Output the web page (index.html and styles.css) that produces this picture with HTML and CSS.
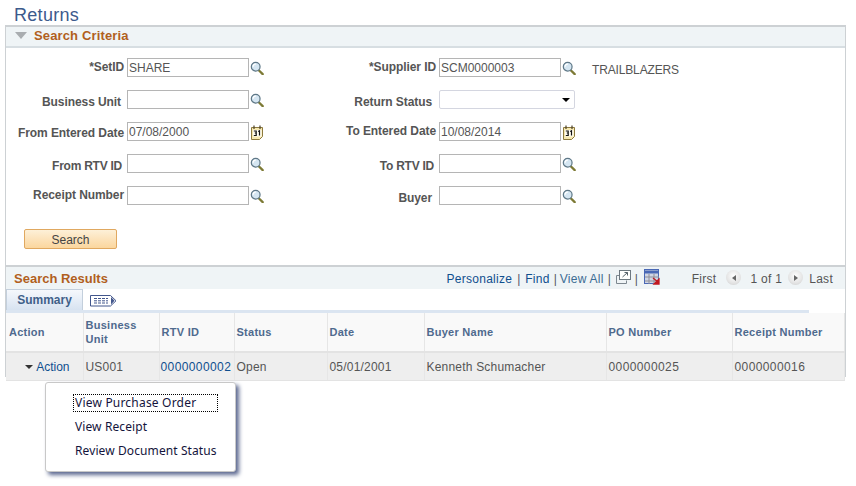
FILE: index.html
```html
<!DOCTYPE html>
<html lang="en">
<head>
<meta charset="utf-8">
<title>Returns</title>
<link rel="stylesheet" href="styles.css">
</head>
<body>
<svg class="defs" width="0" height="0" aria-hidden="true">
  <symbol id="lookup" viewBox="0 0 16 16">
    <path d="M10 10.500l4.500 4.500" stroke="#7d7a35" stroke-width="2.600" stroke-linecap="round"/>
    <circle cx="6.500" cy="6.500" r="5" fill="#d5e6f2" stroke="#5f7887" stroke-width="1.400"/>
    <path d="M3.600 6.500a3 3 0 0 1 3-3" fill="none" stroke="#fff" stroke-width="1.300"/>
  </symbol>
  <symbol id="cal" viewBox="0 0 12 15">
    <path d="M.5 2.500h11v9l-3 3h-8z" fill="#f6e8b0" stroke="#8d7a3e"/>
    <path d="M3 .5v3.500M9 .5v3.500" stroke="#4c4228" stroke-width="1.200"/>
    <rect x="2" y="5" width="8.500" height="6.500" fill="#fffdf2"/>
    <path d="M2.800 6h2.400v2h-1.400h1.400v2.500h-2.400M7.200 6.500l1.300-.7v4.700" fill="none" stroke="#111" stroke-width="1.200"/>
  </symbol>
</svg>

<h1 class="page-title">Returns</h1>

<section class="criteria">
  <h2 class="criteria-head"><span class="collapse-arrow"></span>Search Criteria</h2>
  <div class="form-grid">
    <label class="lbl end-124 off-9">*SetID</label>
    <div class="field"><input class="txt" value="SHARE"><svg class="ico"><use href="#lookup"/></svg></div>
    <label class="lbl end-436 off-9">*Supplier ID</label>
    <div class="field"><input class="txt" value="SCM0000003"><svg class="ico"><use href="#lookup"/></svg><span class="desc">TRAILBLAZERS</span></div>

    <label class="lbl end-121 off-12">Business Unit</label>
    <div class="field"><input class="txt"><svg class="ico"><use href="#lookup"/></svg></div>
    <label class="lbl end-432 off-12">Return Status</label>
    <div class="field"><div class="select"><span class="select-arrow"></span></div></div>

    <label class="lbl end-124 off-11">From Entered Date</label>
    <div class="field"><input class="txt" value="07/08/2000"><svg class="ico cal"><use href="#cal"/></svg></div>
    <label class="lbl end-436 off-9">To Entered Date</label>
    <div class="field"><input class="txt" value="10/08/2014"><svg class="ico cal"><use href="#cal"/></svg></div>

    <label class="lbl end-122 off-12 narrow">From RTV ID</label>
    <div class="field"><input class="txt"><svg class="ico"><use href="#lookup"/></svg></div>
    <label class="lbl end-434 off-12 narrow">To RTV ID</label>
    <div class="field"><input class="txt"><svg class="ico"><use href="#lookup"/></svg></div>

    <label class="lbl end-124 off-9">Receipt Number</label>
    <div class="field"><input class="txt"><svg class="ico"><use href="#lookup"/></svg></div>
    <label class="lbl end-432 off-12">Buyer</label>
    <div class="field"><input class="txt"><svg class="ico"><use href="#lookup"/></svg></div>
  </div>
  <button class="search-btn" type="button">Search</button>
</section>

<section class="results">
  <div class="results-head">
    <h2 class="results-title">Search Results</h2>
    <div class="nav">
      <a class="link">Personalize</a><span class="sep s1">|</span><a class="link">Find</a><span class="sep s2">|</span><a class="link grey">View All</a><span class="sep s3">|</span>
      <svg class="nav-ico" width="15" height="14" viewBox="0 0 15 14"><path d="M.5 5.500h3M.5 5.500v8h10v-3" fill="none" stroke="#7d8890"/><rect x="3.500" y=".5" width="11" height="9" fill="#fff" stroke="#6d7880"/><path d="M6.500 7l5-4.500M8.500 2.500h3v3" fill="none" stroke="#56626a"/></svg>
      <span class="sep s4">|</span>
      <svg class="nav-ico grid-ico" width="16" height="16" viewBox="0 0 16 16"><rect x=".5" y=".5" width="14" height="14" fill="#cfd5e4" stroke="#4a68b5"/><path d="M.5 3h14" stroke="#4a68b5" stroke-width="3"/><path d="M5 5v10M10 5v10M1 8h14M1 12h14" stroke="#8f8f98"/><path d="M9 9l5 4M15 10v5h-5z" fill="#c01820" stroke="#c01820" stroke-width="1.300"/></svg>
      <span class="pager first">First</span>
      <span class="round prev"><span class="tri-left"></span></span>
      <span class="pager">1 of 1</span>
      <span class="round next"><span class="tri-right"></span></span>
      <span class="pager">Last</span>
    </div>
  </div>
  <div class="tabs">
    <div class="tab">Summary</div>
    <svg class="tab-ico" width="27" height="13" viewBox="0 0 27 13"><path d="M.5 1.500v10.500h20l5.500-5.250-5.500-5.250z" fill="#fff" stroke="#42568c"/><path d="M4 4.500h14M4 9h14M4 6.800h14" stroke="#42568c" stroke-dasharray="3 1"/><path d="M21 3l3.500 3.750-3.500 3.750z" fill="#42568c"/></svg>
  </div>
  <div class="tab-rule"></div>
  <table class="grid">
    <colgroup>
      <col class="c1"><col class="c2"><col class="c3"><col class="c4"><col class="c5"><col class="c6"><col class="c7"><col class="c8">
    </colgroup>
    <thead>
      <tr>
        <th class="first-col">Action</th><th>Business<br>Unit</th><th>RTV ID</th><th>Status</th><th>Date</th><th>Buyer Name</th><th>PO Number</th><th>Receipt Number</th>
      </tr>
    </thead>
    <tbody>
      <tr>
        <td class="action"><span class="action-arrow"></span><a class="link">Action</a></td>
        <td>US001</td>
        <td class="num rtv"><a class="link">0000000002</a></td>
        <td>Open</td>
        <td>05/01/2001</td>
        <td>Kenneth Schumacher</td>
        <td class="num">0000000025</td>
        <td class="num">0000000016</td>
      </tr>
    </tbody>
  </table>
</section>

<ul class="menu">
  <li class="menu-item focused">View Purchase Order</li>
  <li class="menu-item">View Receipt</li>
  <li class="menu-item">Review Document Status</li>
</ul>
</body>
</html>
```

FILE: styles.css
```css
* { box-sizing: border-box; }

html, body { height: 100%; }

body {
  margin: 0;
  padding: 5px 10px 0 5px;
  background: #fff;
  color: #555;
  font: 12px "Liberation Sans", Arial, sans-serif;
  position: relative;
  overflow: hidden;
}

.defs { position: absolute; }

.page-title {
  margin: 0 0 0 9px;
  height: 20px;
  font-size: 18px;
  line-height: 20px;
  font-weight: normal;
  letter-spacing: .3px;
  color: #3c5a8c;
}

.criteria {
  height: 240px;
  border: 1px solid #cdd1d4;
  border-top-width: 2px;
  border-bottom: 0;
}

.criteria-head {
  margin: 0;
  height: 21px;
  padding: 0 0 2px 9px;
  display: flex;
  align-items: center;
  gap: 7px;
  background: #eff4f6;
  border-bottom: 2px solid #d7dee2;
  color: #b15f1d;
  font-size: 13px;
  font-weight: bold;
  line-height: 16px;
  letter-spacing: .14px;
}

.collapse-arrow {
  width: 0;
  height: 0;
  border-left: 6px solid transparent;
  border-right: 6px solid transparent;
  border-top: 7px solid #a9adb0;
}

.form-grid {
  display: grid;
  grid-template-columns: 121px 190px 122px 1fr;
  grid-auto-rows: 32px;
  margin-top: 10px;
}

.lbl {
  font-weight: bold;
  color: #555;
  text-align: right;
  line-height: 19px;
  white-space: nowrap;
  letter-spacing: -.08px;
}

.lbl.narrow { letter-spacing: -.25px; }

.end-124 { padding-right: 3px; }
.end-122 { padding-right: 5px; }
.end-121 { padding-right: 6px; }
.end-436 { padding-right: 3px; }
.end-434 { padding-right: 5px; }
.end-432 { padding-right: 7px; }

.off-9 { padding-top: 0; }
.off-11 { padding-top: 2px; }
.off-12 { padding-top: 3px; }

.field {
  display: flex;
  align-items: flex-start;
  height: 19px;
}

.txt {
  width: 122px;
  height: 19px;
  margin: 0;
  padding: 0 1px;
  border: 1px solid #b5b5b5;
  background: #fff;
  color: #555;
  font: 12px "Liberation Sans", Arial, sans-serif;
  outline: 0;
}

.ico {
  width: 14px;
  height: 14px;
  margin: 3px 0 0 1px;
  flex: none;
}

.ico.cal {
  width: 12px;
  height: 15px;
  margin: 3px 0 0 2px;
}

.desc {
  margin: 3px 0 0 16px;
  line-height: 18px;
  letter-spacing: -.15px;
  color: #555;
}

.select {
  width: 136px;
  height: 19px;
  border: 1px solid #d4d6e0;
  border-radius: 2px;
  background: #fff;
  display: flex;
  align-items: center;
  justify-content: flex-end;
  padding-right: 4px;
}

.select-arrow {
  width: 0;
  height: 0;
  border-left: 4px solid transparent;
  border-right: 4px solid transparent;
  border-top: 4px solid #000;
}

.search-btn {
  display: block;
  width: 93px;
  height: 20px;
  margin: 11px 0 0 18px;
  padding: 1px 0 0;
  border: 1px solid #e0a860;
  border-radius: 2px;
  background: linear-gradient(#fdf0d8, #fbd69e);
  color: #444;
  font: 12px "Liberation Sans", Arial, sans-serif;
}

.results {
  height: 112px;
  border: 1px solid #cdd1d4;
  border-top: 2px solid #cdd1d4;
  border-bottom: 0;
}

.results-head {
  height: 22px;
  background: #eff4f6;
  display: flex;
  align-items: center;
  justify-content: space-between;
  padding: 0 12px 0 8px;
}

.results-title {
  margin: 0;
  color: #b15f1d;
  font-size: 13px;
  font-weight: bold;
}

.nav {
  display: flex;
  align-items: center;
  padding-top: 1px;
  line-height: 16px;
  letter-spacing: .28px;
}

.link { color: #0f4f8e; }
.link.grey { color: #3c6c94; }

.sep { color: #556; width: 3px; }
.s1 { margin: 0 5px; }
.s2 { margin: 0 3px 0 4px; }
.s3 { margin: 0 5px 0 4px; }
.s4 { margin: 0 6px 0 4px; }

.nav-ico { flex: none; margin-top: -4px; }

.pager { color: #555; }
.first { margin-left: 32px; }

.round {
  width: 15px;
  height: 15px;
  margin-top: -2px;
  border-radius: 50%;
  background: radial-gradient(circle at 50% 40%, #fff, #e4e4e4 60%, #c8c8c8);
  display: flex;
  align-items: center;
  justify-content: center;
}

.prev { margin-left: 10px; margin-right: 9px; }
.next { margin-left: 6px; margin-right: 6px; }

.tri-left {
  border-top: 3px solid transparent;
  border-bottom: 3px solid transparent;
  border-right: 4px solid #666;
}

.tri-right {
  border-top: 3px solid transparent;
  border-bottom: 3px solid transparent;
  border-left: 4px solid #666;
}

.tabs {
  height: 21px;
  display: flex;
  align-items: flex-end;
}

.tab {
  width: 77px;
  height: 21px;
  border: 1px solid #c3cfdc;
  border-bottom: 0;
  background: linear-gradient(#f5f8fc, #d7e3f1);
  color: #3f6089;
  font-weight: bold;
  text-align: center;
  line-height: 21px;
}

.tab-ico { margin: 0 0 3px 7px; }

.tab-rule {
  height: 3px;
  width: 803px;
  background: #dbe5f1;
}

.grid {
  border-collapse: collapse;
  table-layout: fixed;
  width: 838px;
}

.c1 { width: 77px; }
.c2 { width: 76px; }
.c3 { width: 75px; }
.c4 { width: 93px; }
.c5 { width: 97px; }
.c6 { width: 182px; }
.c7 { width: 126px; }
.c8 { width: 112px; }

.grid th {
  height: 39px;
  padding: 0 2px;
  background: #f9f9f9;
  border-right: 1px solid #e6e6e6;
  border-bottom: 2px solid #e3e3e3;
  color: #4f6a8e;
  font-size: 11px;
  font-weight: bold;
  text-align: left;
  line-height: 14px;
  letter-spacing: .27px;
}

.grid th.first-col { padding-left: 3px; }

.grid td {
  height: 28px;
  padding: 1px 2px 0;
  background: #eee;
  border-right: 1px solid #e6e6e6;
  border-bottom: 1px solid #e3e3e3;
  color: #555;
  white-space: nowrap;
  letter-spacing: .2px;
}

.grid td.num { letter-spacing: .4px; }
.grid td.rtv { padding-left: 1px; }

.grid td.action {
  text-align: right;
  padding-right: 13px;
  letter-spacing: 0;
}

.action-arrow {
  display: inline-block;
  width: 0;
  height: 0;
  margin: 0 3px 2px 0;
  border-left: 4px solid transparent;
  border-right: 4px solid transparent;
  border-top: 4px solid #333;
}

.menu {
  position: absolute;
  left: 45px;
  top: 382px;
  width: 191px;
  height: 90px;
  margin: 0;
  padding: 11px 0 0 27px;
  list-style: none;
  background: #fff;
  border: 1px solid #c8c8c8;
  border-radius: 3px;
  box-shadow: 3px 3px 4px #5c6890;
}

.menu-item {
  width: 145px;
  height: 24px;
  padding: 0 2px;
  color: #14143c;
  font: 12px/18px "Noto Sans", Verdana, sans-serif;
  letter-spacing: .1px;
  white-space: nowrap;
}

.menu-item.focused {
  height: 18px;
  margin-bottom: 6px;
  border: 1px dotted #000;
  padding: 0 1px;
  line-height: 16px;
  letter-spacing: .2px;
}
```
